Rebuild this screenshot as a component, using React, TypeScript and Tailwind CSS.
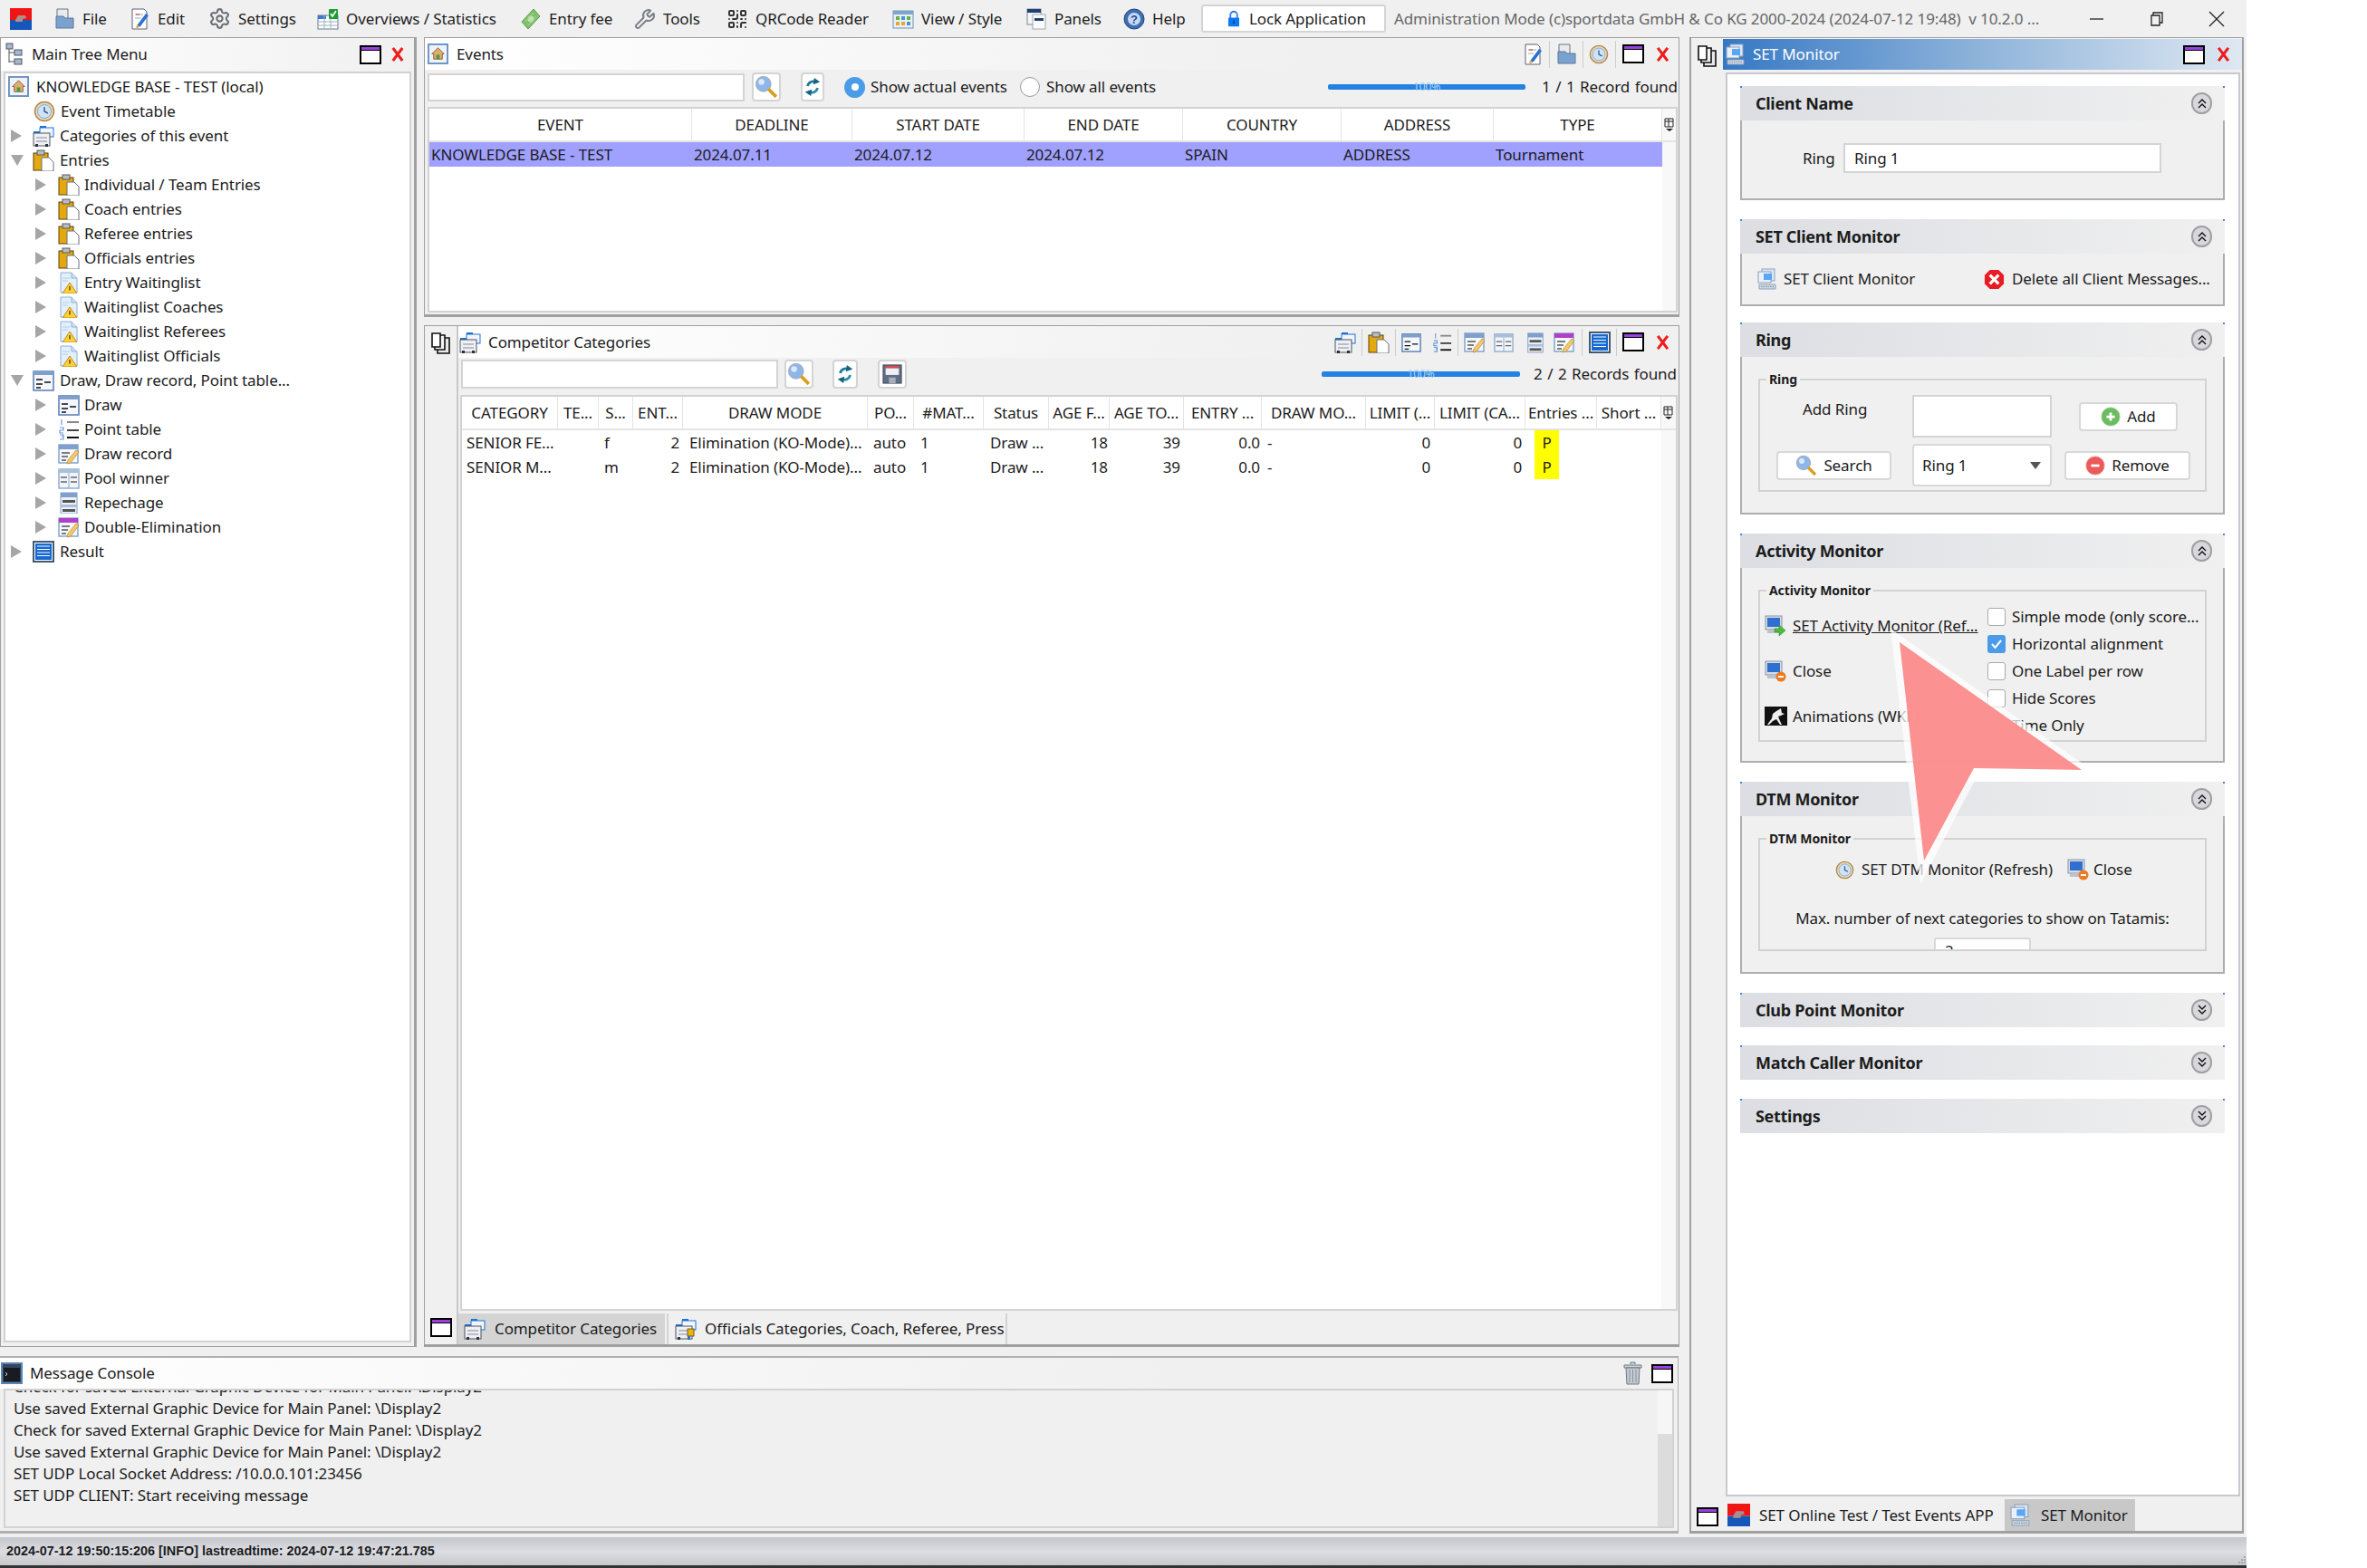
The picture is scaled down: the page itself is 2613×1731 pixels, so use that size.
import { ReactNode } from "react";
import { Settings as Gear, Wrench, QrCode } from "lucide-react";

const Ico = ({ children, className = "w-[24px] h-[24px]" }: { children: ReactNode; className?: string }) => (
  <svg viewBox="0 0 24 24" className={`shrink-0 ${className}`}>
    {children}
  </svg>
);
type IP = { className?: string };

const Logo = ({ className }: IP) => (
  <Ico className={className}>
    <rect width="24" height="13" fill="#f01414" />
    <rect y="13" width="24" height="11" fill="#1457b8" />
    <path d="M6 13l3-5h8l1 3-4 1v3H6z" fill="#a98f8f" />
  </Ico>
);
const FileIco = ({ className }: IP) => (
  <Ico className={className}>
    <path d="M4 1h12v20H4z" fill="#e8eaee" stroke="#6b7480" />
    <path d="M3 9h8l2 2h9v11H3z" fill="#7ba1cf" stroke="#5b7898" />
  </Ico>
);
const EditIco = ({ className }: IP) => (
  <Ico className={className}>
    <path d="M4 1h13l3 3v19H4z" fill="#fff" stroke="#5a6470" />
    <path d="M7 7h9M7 11h6" stroke="#9aa" />
    <path d="M8 7h4" stroke="#d33" />
    <path d="M19 6l3 2-9 12-4 2 1-4z" fill="#2a6fd8" />
    <path d="M9 18l-1 4 4-2z" fill="#f0b030" />
  </Ico>
);
const OverIco = ({ className }: IP) => (
  <Ico className={className}>
    <rect x="1" y="8" width="22" height="15" fill="#fff" stroke="#6a7a8a" />
    <rect x="1" y="8" width="9" height="4" fill="#3b78d8" />
    <path d="M1 15h22M1 19h22M8 8v15M15 8v15" stroke="#9db0c0" />
    <rect x="13" y="1" width="10" height="11" rx="1" fill="#1d9b35" />
    <path d="M15 6l2 3 4-6" stroke="#fff" strokeWidth="1.6" fill="none" />
  </Ico>
);
const MoneyIco = ({ className }: IP) => (
  <Ico className={className}>
    <path d="M2 15L15 1l7 8L9 23z" fill="#7fc06a" stroke="#5f9c50" />
    <circle cx="12" cy="12" r="3.4" fill="#bfe5ae" />
    <path d="M6 15l9-10M9 19l9-10" stroke="#a8d898" />
  </Ico>
);
const ViewIco = ({ className }: IP) => (
  <Ico className={className}>
    <rect x="1" y="3" width="22" height="19" fill="#e9f0f7" stroke="#6e8fb0" />
    <rect x="1" y="3" width="22" height="4" fill="#7ea6cd" />
    <rect x="4" y="9" width="4" height="4" fill="#65b345" />
    <rect x="10" y="9" width="4" height="4" fill="#4b95d6" />
    <rect x="16" y="9" width="4" height="4" fill="#65b345" />
    <rect x="4" y="15" width="4" height="4" fill="#e4a82f" />
    <rect x="10" y="15" width="4" height="4" fill="#e4a82f" />
    <rect x="16" y="15" width="4" height="4" fill="#4b95d6" />
  </Ico>
);
const PanelsIco = ({ className }: IP) => (
  <Ico className={className}>
    <rect x="2" y="1" width="15" height="17" fill="#f5f6f8" stroke="#7f8892" />
    <rect x="2" y="1" width="15" height="4" fill="#1e3f78" />
    <rect x="8" y="7" width="14" height="16" fill="#fbfbfb" stroke="#a0a8b0" />
    <rect x="10" y="11" width="10" height="3" fill="#1e3f78" />
  </Ico>
);
const HelpIco = ({ className }: IP) => (
  <Ico className={className}>
    <circle cx="12" cy="12" r="11" fill="#3d6fb8" stroke="#24446f" />
    <circle cx="12" cy="12" r="7" fill="#c7daf2" />
    <text x="12" y="16.5" fontSize="13" fontWeight="700" textAnchor="middle" fill="#24508f" fontFamily="Liberation Sans">?</text>
  </Ico>
);
const LockIco = ({ className }: IP) => (
  <Ico className={className}>
    <path d="M7 11V6a5 5 0 0 1 10 0v5" fill="none" stroke="#2d7ff0" strokeWidth="2.4" />
    <rect x="4" y="10" width="16" height="13" rx="1" fill="#0a78f0" />
    <rect x="11" y="14" width="2" height="5" fill="#0c3c80" />
  </Ico>
);
const HouseIco = ({ className }: IP) => (
  <Ico className={className}>
    <rect x="1" y="1" width="22" height="22" fill="#eef3fa" stroke="#6c93c4" strokeWidth="2" />
    <path d="M12 5l7 7h-2v6H7v-6H5z" fill="#d8b070" stroke="#a05a38" />
    <rect x="10" y="13" width="4" height="5" fill="#4f9a3f" />
  </Ico>
);
const ClockIco = ({ className }: IP) => (
  <Ico className={className}>
    <circle cx="12" cy="12" r="10.5" fill="#e8d8b8" stroke="#b08850" strokeWidth="1.5" />
    <circle cx="12" cy="12" r="7.5" fill="#cfe3f8" stroke="#8da8c8" />
    <path d="M12 7v5l4 2" stroke="#39598a" strokeWidth="1.4" fill="none" />
  </Ico>
);
const CatIco = ({ className }: IP) => (
  <Ico className={className}>
    <rect x="8" y="1" width="7" height="3" fill="#1c72d8" />
    <rect x="8" y="3" width="15" height="10" fill="#f2f6fb" stroke="#1c72d8" />
    <rect x="1" y="7" width="7" height="3" fill="#1c72d8" />
    <rect x="1" y="9" width="18" height="14" fill="#eef0f3" stroke="#4c5560" />
    <path d="M4 14h12M4 18h12" stroke="#aab" strokeWidth="1.5" />
    <rect x="3" y="21" width="3" height="3" fill="#2a3240" />
    <rect x="14" y="21" width="3" height="3" fill="#2a3240" />
  </Ico>
);
const OfficialIco = ({ className }: IP) => (
  <Ico className={className}>
    <rect x="8" y="1" width="7" height="3" fill="#1c72d8" />
    <rect x="8" y="3" width="15" height="10" fill="#f2f6fb" stroke="#1c72d8" />
    <rect x="1" y="7" width="7" height="3" fill="#1c72d8" />
    <rect x="1" y="9" width="18" height="14" fill="#eef0f3" stroke="#4c5560" />
    <path d="M4 14h12M4 18h12" stroke="#aab" strokeWidth="1.5" />
    <rect x="14" y="12" width="7" height="8" fill="#eab40c" stroke="#5e4008" strokeWidth=".8" />
    <rect x="3" y="21" width="3" height="3" fill="#2a3240" />
    <rect x="14" y="20" width="3" height="4" fill="#2a72c8" />
  </Ico>
);
const ClipIco = ({ className }: IP) => (
  <Ico className={className}>
    <rect x="1" y="4" width="16" height="19" fill="#e4a90f" stroke="#5e4008" />
    <rect x="5" y="1" width="8" height="5" fill="#b8bcc4" stroke="#5a5a5a" />
    <path d="M10 9h8l5 5v10H10z" fill="#fff" stroke="#69727e" />
  </Ico>
);
const WaitIco = ({ className }: IP) => (
  <Ico className={className}>
    <path d="M3 1h12l6 6v16H3z" fill="#e3effb" stroke="#8db0d8" />
    <path d="M15 1v6h6" fill="#cfe0f4" stroke="#8db0d8" />
    <path d="M5 7h8M5 10h6" stroke="#b6cde8" />
    <path d="M13 12l8 12H5z" fill="#f9d23a" stroke="#c58a12" />
    <path d="M13 16v4.500" stroke="#6a4a08" strokeWidth="1.5" />
  </Ico>
);
const DrawIco = ({ className }: IP) => (
  <Ico className={className}>
    <rect x="1" y="2" width="22" height="21" fill="#f4f7fb" stroke="#5f83b5" strokeWidth="1.6" />
    <rect x="1" y="2" width="22" height="4" fill="#7fa0cc" />
    <path d="M4 11h7M4 16h7M13 14h7M4 20h5" stroke="#111" strokeWidth="1.5" />
  </Ico>
);
const PointIco = ({ className }: IP) => (
  <Ico className={className}>
    <path d="M4 1v6M2 10h4v3H2v3h4M2 18h4v5H2M4 20h2" stroke="#6d9ad8" strokeWidth="1.2" fill="none" />
    <path d="M10 4h13" stroke="#888" strokeWidth="2" />
    <path d="M10 13h13" stroke="#444" strokeWidth="2" />
    <path d="M10 21h13" stroke="#111" strokeWidth="2" />
  </Ico>
);
const RecordIco = ({ className, top = "#7fa0cc" }: IP & { top?: string }) => (
  <Ico className={className}>
    <rect x="1" y="2" width="21" height="20" fill="#f4f7fb" stroke="#7fa0cc" strokeWidth="1.4" />
    <rect x="1" y="2" width="21" height="5" fill={top} />
    <path d="M4 11h9M4 15h7M4 19h5" stroke="#555" strokeWidth="1.4" />
    <path d="M20 8l3 2-9 12-4 1 1-4z" fill="#f3c969" stroke="#b8862c" strokeWidth=".7" />
  </Ico>
);
const PoolIco = ({ className }: IP) => (
  <Ico className={className}>
    <rect x="1" y="2" width="22" height="21" fill="#f1f5fa" stroke="#8aa8cc" strokeWidth="1.4" />
    <rect x="1" y="2" width="22" height="4" fill="#a9c0dd" />
    <path d="M12 6v17" stroke="#8aa8cc" />
    <path d="M3 11h7M3 16h7M14 11h7M14 16h7" stroke="#666" strokeWidth="1.5" />
  </Ico>
);
const RepIco = ({ className }: IP) => (
  <Ico className={className}>
    <rect x="3" y="1" width="18" height="23" fill="#eef2f8" stroke="#7fa0cc" />
    <rect x="3" y="1" width="18" height="5" fill="#7fa0cc" />
    <rect x="5" y="9" width="14" height="3" fill="#555" />
    <rect x="3" y="14" width="18" height="3" fill="#a9c0dd" />
    <rect x="5" y="19" width="14" height="3" fill="#555" />
  </Ico>
);
const ResultIco = ({ className }: IP) => (
  <Ico className={className}>
    <rect x="1" y="1" width="22" height="22" fill="#fff" stroke="#44586e" strokeWidth="2" />
    <rect x="3" y="3" width="18" height="18" fill="#1568d0" />
    <path d="M5 6h14M5 9.500h14M5 13h14M5 16.500h14" stroke="#fff" />
  </Ico>
);
const MaxIco = ({ className = "w-[24px] h-[30px]" }: IP) => (
  <span className={`shrink-0 flex flex-col border-[2px] border-black bg-white ${className}`}>
    <span className="h-[4px] bg-[#9a3fe0] border-b border-black" />
  </span>
);
const CloseIco = ({ className = "w-[16px] h-[20px]" }: IP) => (
  <svg viewBox="0 0 16 20" className={`shrink-0 ${className}`}>
    <path d="M2 2l12 16M14 2L2 18" stroke="#ee1c1c" strokeWidth="3.4" />
  </svg>
);
const StackIco = ({ className = "w-[22px] h-[24px]" }: IP) => (
  <svg viewBox="0 0 22 24" className={`shrink-0 ${className}`}>
    <path d="M7 6h13v17H7z" fill="#e8e8e8" stroke="#111" strokeWidth="1.6" />
    <path d="M4 3h11v16H4z" fill="#f4f4f4" stroke="#111" strokeWidth="1.6" />
    <path d="M1 1h9v15H1z" fill="#fff" stroke="#111" strokeWidth="1.6" />
  </svg>
);
const SearchIco = ({ className = "w-[26px] h-[26px]" }: IP) => (
  <Ico className={className}>
    <circle cx="9" cy="9" r="7.5" fill="#8cb6ec" stroke="#a2b4c8" strokeWidth="1.5" />
    <circle cx="7" cy="7" r="3" fill="#dce9fa" />
    <path d="M14 14l8 8" stroke="#d8a020" strokeWidth="3.4" />
  </Ico>
);
const RefreshIco = ({ className = "w-[22px] h-[24px]" }: IP) => (
  <Ico className={className}>
    <path d="M6 11a7 7 0 0 1 10-5" fill="none" stroke="#1f7a96" strokeWidth="3" />
    <path d="M14 1l7 5-8 3z" fill="#15647c" />
    <path d="M18 13a7 7 0 0 1-10 5" fill="none" stroke="#2a8ca8" strokeWidth="3" />
    <path d="M10 23l-7-5 8-3z" fill="#15647c" />
  </Ico>
);
const SaveIco = ({ className = "w-[22px] h-[24px]" }: IP) => (
  <Ico className={className}>
    <rect x="1" y="1" width="22" height="22" fill="#5f6d86" stroke="#3a4252" />
    <rect x="4" y="2" width="16" height="3" fill="#d84c4c" />
    <rect x="4" y="5" width="16" height="8" fill="#eef0f4" />
    <rect x="8" y="16" width="8" height="7" fill="#a7adb9" />
  </Ico>
);
const MonIco = ({ className }: IP) => (
  <Ico className={className}>
    <rect x="6" y="1" width="14" height="13" fill="#dbe7f4" stroke="#8ba2bb" />
    <rect x="2" y="4" width="14" height="12" fill="#eaf0f7" stroke="#8ba2bb" />
    <rect x="8" y="6" width="9" height="7" fill="#58a6f5" />
    <path d="M3 18h18v5H3z" fill="#cfd8e2" stroke="#8ba2bb" />
    <path d="M5 20.500h14" stroke="#7f8f9f" strokeDasharray="1.500 1" />
  </Ico>
);
const PcIco = ({ kind, className = "w-[24px] h-[24px]" }: IP & { kind: "go" | "stop" }) => (
  <Ico className={className}>
    <rect x="1" y="1" width="18" height="15" fill="#d6dce4" stroke="#8993a0" />
    <rect x="3" y="3" width="14" height="10" fill="#2f6fd2" />
    <path d="M3 17h14v3H3z" fill="#bcc3cc" />
    {kind === "go" ? (
      <path d="M11 15h5v-4l7 6-7 6v-4h-5z" fill="#4fbb3e" stroke="#2e8a25" strokeWidth=".6" />
    ) : (
      <g>
        <circle cx="18" cy="18" r="5.500" fill="#ec7a1e" />
        <rect x="15" y="17" width="6" height="2" fill="#fff" />
      </g>
    )}
  </Ico>
);
const AnimIco = ({ className = "w-[25px] h-[21px]" }: IP) => (
  <svg viewBox="0 0 25 21" className={`shrink-0 ${className}`}>
    <rect width="25" height="21" fill="#111" />
    <path d="M3 20l5-7 1-5 4-3 5-3 1 5 3 1-4 2-3 1 2 5 2 4h-2l-4-6-4 2-4 4z" fill="#eee" />
  </svg>
);
const TrashIco = ({ className = "w-[21px] h-[26px]" }: IP) => (
  <svg viewBox="0 0 21 26" className={`shrink-0 ${className}`}>
    <path d="M8 3V1h5v2M1 4h19v3H1z" fill="#cdd2d8" stroke="#6f7882" />
    <path d="M3 7h15l-1 18H4z" fill="#c2c9d1" stroke="#6f7882" />
    <path d="M7 9v14M10.500 9v14M14 9v14" stroke="#8b949e" />
  </svg>
);
const ColsIco = () => (
  <svg viewBox="0 0 12 16" className="w-[12px] h-[16px]">
    <path d="M1 1h9v9H1zM1 4h9M5 1v9" fill="none" stroke="#222" />
    <path d="M2 12h8l-4 3z" fill="#222" />
  </svg>
);
const Collapse = ({ open }: { open: boolean }) => (
  <span className="w-[23px] h-[24px] rounded-full bg-[#d8d8dc] border-[2px] border-[#a0a0a4] flex items-center justify-center shrink-0">
    <svg viewBox="0 0 12 12" className="w-[12px] h-[14px]">
      <path
        d={open ? "M2 6l4-4 4 4M2 11l4-4 4 4" : "M2 1l4 4 4-4M2 6l4 4 4-4"}
        fill="none"
        stroke="#111"
        strokeWidth="1.4"
      />
    </svg>
  </span>
);

const FONT = "[font-family:'Noto_Sans',sans-serif] text-[17px] tracking-[-0.1px] text-[#1c1c1c]";

const menu = [
  { label: "File", icon: <FileIco />, w: "w-[83px]" },
  { label: "Edit", icon: <EditIco />, w: "w-[88px]" },
  { label: "Settings", icon: <Gear size={25} color="#6a6f75" />, w: "w-[120px]" },
  { label: "Overviews / Statistics", icon: <OverIco />, w: "w-[224px]" },
  { label: "Entry fee", icon: <MoneyIco />, w: "w-[126px]" },
  { label: "Tools", icon: <Wrench size={24} color="#7a8088" />, w: "w-[102px]" },
  { label: "QRCode Reader", icon: <QrCode size={24} color="#333" />, w: "w-[183px]" },
  { label: "View / Style", icon: <ViewIco />, w: "w-[147px]" },
  { label: "Panels", icon: <PanelsIco />, w: "w-[108px]" },
  { label: "Help", icon: <HelpIco />, w: "w-[86px]" },
];

function Toolbar() {
  return (
    <div className="h-[41px] flex items-center pl-[11px]">
      <Logo />
      <div className="w-[24px]" />
      {menu.map((m) => (
        <div key={m.label} className={`${m.w} flex items-center gap-[8px] whitespace-nowrap`}>
          {m.icon}
          <span>{m.label}</span>
        </div>
      ))}
      <div className="w-[204px] h-[31px] flex items-center pl-[25px] gap-[8px] bg-white border-2 border-[#d4d4d4] rounded-[3px]">
        <LockIco className="w-[18px] h-[24px]" />
        <span>Lock Application</span>
      </div>
      <span className="ml-[9px] w-[745px] text-[#666] whitespace-nowrap">
        Administration Mode (c)sportdata GmbH &amp; Co KG 2000-2024 (2024-07-12 19:48)&nbsp; v 10.2.0 ...
      </span>
      <div className="w-[8px]" />
      <svg viewBox="0 0 18 18" className="w-[18px] h-[18px] ml-[14px]">
        <path d="M1 9h15" stroke="#222" strokeWidth="1.3" />
      </svg>
      <svg viewBox="0 0 18 18" className="w-[18px] h-[18px] ml-[48px]">
        <path d="M5 5V2h10v11h-3M3 5h9v11H3z" fill="none" stroke="#222" strokeWidth="1.3" />
      </svg>
      <svg viewBox="0 0 18 18" className="w-[18px] h-[18px] ml-[48px]">
        <path d="M1 1l16 16M17 1L1 17" stroke="#222" strokeWidth="1.3" />
      </svg>
    </div>
  );
}

const tree = [
  { pad: "pl-[3px]", gap: "gap-[8px]", arrow: "none", icon: <HouseIco className="w-[23px] h-[23px]" />, label: "KNOWLEDGE BASE - TEST (local)", slot: "" },
  { pad: "pl-[31px]", gap: "gap-[6px]", arrow: "none", icon: <ClockIco />, label: "Event Timetable", slot: "" },
  { pad: "pl-[6px]", gap: "gap-[6px]", arrow: "right", icon: <CatIco />, label: "Categories of this event", slot: "w-[24px]" },
  { pad: "pl-[6px]", gap: "gap-[6px]", arrow: "down", icon: <ClipIco />, label: "Entries", slot: "w-[24px]" },
  { pad: "pl-[33px]", gap: "gap-[5px]", arrow: "right", icon: <ClipIco />, label: "Individual / Team Entries", slot: "w-[25px]" },
  { pad: "pl-[33px]", gap: "gap-[5px]", arrow: "right", icon: <ClipIco />, label: "Coach entries", slot: "w-[25px]" },
  { pad: "pl-[33px]", gap: "gap-[5px]", arrow: "right", icon: <ClipIco />, label: "Referee entries", slot: "w-[25px]" },
  { pad: "pl-[33px]", gap: "gap-[5px]", arrow: "right", icon: <ClipIco />, label: "Officials entries", slot: "w-[25px]" },
  { pad: "pl-[33px]", gap: "gap-[5px]", arrow: "right", icon: <WaitIco />, label: "Entry Waitinglist", slot: "w-[25px]" },
  { pad: "pl-[33px]", gap: "gap-[5px]", arrow: "right", icon: <WaitIco />, label: "Waitinglist Coaches", slot: "w-[25px]" },
  { pad: "pl-[33px]", gap: "gap-[5px]", arrow: "right", icon: <WaitIco />, label: "Waitinglist Referees", slot: "w-[25px]" },
  { pad: "pl-[33px]", gap: "gap-[5px]", arrow: "right", icon: <WaitIco />, label: "Waitinglist Officials", slot: "w-[25px]" },
  { pad: "pl-[6px]", gap: "gap-[6px]", arrow: "down", icon: <DrawIco />, label: "Draw, Draw record, Point table...", slot: "w-[24px]" },
  { pad: "pl-[33px]", gap: "gap-[5px]", arrow: "right", icon: <DrawIco />, label: "Draw", slot: "w-[25px]" },
  { pad: "pl-[33px]", gap: "gap-[5px]", arrow: "right", icon: <PointIco />, label: "Point table", slot: "w-[25px]" },
  { pad: "pl-[33px]", gap: "gap-[5px]", arrow: "right", icon: <RecordIco />, label: "Draw record", slot: "w-[25px]" },
  { pad: "pl-[33px]", gap: "gap-[5px]", arrow: "right", icon: <PoolIco />, label: "Pool winner", slot: "w-[25px]" },
  { pad: "pl-[33px]", gap: "gap-[5px]", arrow: "right", icon: <RepIco />, label: "Repechage", slot: "w-[25px]" },
  { pad: "pl-[33px]", gap: "gap-[5px]", arrow: "right", icon: <RecordIco top="#b040c8" />, label: "Double-Elimination", slot: "w-[25px]" },
  { pad: "pl-[6px]", gap: "gap-[6px]", arrow: "right", icon: <ResultIco />, label: "Result", slot: "w-[24px]" },
];

function TreeArrow({ dir }: { dir: string }) {
  if (dir === "right")
    return (
      <svg viewBox="0 0 12 14" className="w-[12px] h-[14px]">
        <path d="M0 0l12 7-12 7z" fill="#a6a6a6" />
      </svg>
    );
  return (
    <svg viewBox="0 0 14 12" className="w-[14px] h-[12px]">
      <path d="M0 0h14L7 12z" fill="#a6a6a6" />
    </svg>
  );
}

function TreePanel() {
  return (
    <div className="w-[460px] h-full border border-[#a0a0a0] border-r-[3px] flex flex-col">
      <div className="h-[36px] flex items-center pl-[5px] pr-[11px] bg-gradient-to-r from-white to-[#f0f0f0]">
        <svg viewBox="0 0 20 26" className="w-[20px] h-[26px] shrink-0">
          <path d="M4 4v18M4 11h6M4 21h6" stroke="#555" fill="none" />
          <rect x="1" y="1" width="7" height="6" fill="#a5b8cf" stroke="#556" />
          <rect x="10" y="8" width="8" height="6" fill="#a5b8cf" stroke="#556" />
          <rect x="10" y="18" width="8" height="6" fill="#a5b8cf" stroke="#556" />
        </svg>
        <span className="ml-[9px] flex-1">Main Tree Menu</span>
        <MaxIco className="w-[24px] h-[21px]" />
        <CloseIco className="ml-[11px] w-[14px] h-[18px]" />
      </div>
      <div className="mx-[3px] mb-[4px] mt-[1px] flex-1 bg-white border-2 border-[#d2d2d2] pt-[1px]">
        {tree.map((t) => (
          <div key={t.label} className={`h-[27px] flex items-center whitespace-nowrap ${t.pad}`}>
            {t.arrow !== "none" && (
              <span className={t.slot}>
                <TreeArrow dir={t.arrow} />
              </span>
            )}
            <div className={`flex items-center ${t.gap}`}>
              {t.icon}
              <span>{t.label}</span>
            </div>
          </div>
        ))}
      </div>
    </div>
  );
}

function IconBtn({ children, w }: { children: ReactNode; w: string }) {
  return (
    <div className={`${w} h-[32px] shrink-0 bg-white border-2 border-[#d4d4d4] rounded-[4px] flex items-center justify-center`}>
      {children}
    </div>
  );
}

function Progress({ w }: { w: string }) {
  return (
    <div className={`${w} h-[6px] rounded-[2px] bg-[#2483e2] flex items-center justify-center`}>
      <span className="text-[12px] leading-[6px] text-[#a8d0f4]">100%</span>
    </div>
  );
}

const evCols = "grid grid-cols-[290px_177px_190px_175px_175px_168px_186px_1fr]";
const evHead = ["EVENT", "DEADLINE", "START DATE", "END DATE", "COUNTRY", "ADDRESS", "TYPE"];
const evRow = ["KNOWLEDGE BASE - TEST", "2024.07.11", "2024.07.12", "2024.07.12", "SPAIN", "ADDRESS", "Tournament"];

function EventsPanel() {
  return (
    <div className="h-[309px] shrink-0 border border-[#a0a0a0] border-b-[3px] flex flex-col">
      <div className="h-[35px] shrink-0 flex items-center pl-[3px] bg-gradient-to-r from-white to-[#f0f0f0] to-70%">
        <HouseIco className="w-[23px] h-[23px]" />
        <span className="ml-[9px] flex-1">Events</span>
        <EditIco />
        <span className="w-[1px] h-[30px] bg-[#ccc] mx-[6px]" />
        <FileIco />
        <span className="w-[1px] h-[30px] bg-[#ccc] mx-[6px]" />
        <ClockIco className="w-[22px] h-[22px]" />
        <span className="w-[1px] h-[30px] bg-[#ccc] mx-[7px]" />
        <MaxIco className="w-[24px] h-[21px]" />
        <CloseIco className="ml-[13px] mr-[10px] w-[15px] h-[18px]" />
      </div>
      <div className="h-[38px] mb-[3px] shrink-0 flex items-center pl-[3px]">
        <div className="w-[350px] h-[31px] bg-white border-2 border-[#d4d4d4]" />
        <div className="w-[8px]" />
        <IconBtn w="w-[32px]">
          <SearchIco />
        </IconBtn>
        <div className="w-[22px]" />
        <IconBtn w="w-[26px]">
          <RefreshIco />
        </IconBtn>
        <span className="ml-[22px] w-[23px] h-[23px] rounded-full bg-[#4a9be8] flex items-center justify-center">
          <span className="w-[8px] h-[8px] rounded-full bg-white" />
        </span>
        <span className="ml-[6px] w-[165px] whitespace-nowrap">Show actual events</span>
        <span className="w-[22px] h-[22px] rounded-full bg-white border border-[#999]" />
        <span className="ml-[7px] w-[311px] whitespace-nowrap">Show all events</span>
        <Progress w="w-[218px]" />
        <span className="ml-[18px] whitespace-nowrap [word-spacing:1.200px]">1 / 1 Record found</span>
      </div>
      <div className="ml-[3px] mr-[1px] mb-[2px] flex-1 bg-white border-2 border-[#d2d2d2] flex flex-col">
        <div className={`${evCols} h-[37px] shrink-0 border-b-2 border-[#e4e4e4]`}>
          {evHead.map((h) => (
            <div key={h} className="flex items-center justify-center border-r border-[#e4e4e4]">
              {h}
            </div>
          ))}
          <div className="flex items-center justify-center bg-[#f8f8f8]">
            <ColsIco />
          </div>
        </div>
        <div className="flex-1 flex flex-col">
          <div className={`${evCols} h-[27px] whitespace-nowrap`}>
            {evRow.map((c, i) => (
              <div key={i} className="bg-[#a0a0ff] flex items-center pl-[2px]">
                {c}
              </div>
            ))}
            <div className="bg-[#f8f8f8]" />
          </div>
          <div className="flex-1 flex justify-end">
            <div className="w-[15px] bg-[#f8f8f8]" />
          </div>
        </div>
      </div>
    </div>
  );
}

const catCols = "grid grid-cols-[106px_45px_38px_55px_204px_51px_77px_72px_67px_82px_86px_115px_76px_100px_79px_71px_1fr]";
const catHead = ["CATEGORY", "TE...", "S...", "ENT...", "DRAW MODE", "PO...", "#MAT...", "Status", "AGE F...", "AGE TO...", "ENTRY ...", "DRAW MO...", "LIMIT (...", "LIMIT (CA...", "Entries ...", "Short ..."];
const catAlign = [
  "pl-[5px]", "", "pl-[6px]", "pr-[4px] text-right", "pl-[7px]", "pl-[6px]", "pl-[7px]", "pl-[7px]",
  "pr-[2px] text-right", "pr-[4px] text-right", "pr-[2px] text-right", "pl-[6px]", "pr-[5px] text-right", "pr-[4px] text-right", "", "",
];
const catRows = [
  ["SENIOR FE...", "", "f", "2", "Elimination (KO-Mode)...", "auto", "1", "Draw ...", "18", "39", "0.0", "-", "0", "0", "P", ""],
  ["SENIOR M...", "", "m", "2", "Elimination (KO-Mode)...", "auto", "1", "Draw ...", "18", "39", "0.0", "-", "0", "0", "P", ""],
];

function CategoriesPanel() {
  return (
    <div className="h-[1128px] shrink-0 border border-[#a0a0a0] border-b-[3px] flex">
      <div className="w-[37px] shrink-0 border-r-2 border-[#c8c8c8] flex flex-col items-center justify-between pt-[7px] pb-[8px]">
        <StackIco />
        <MaxIco className="w-[24px] h-[21px]" />
      </div>
      <div className="flex-1 min-w-0 flex flex-col">
        <div className="h-[35px] shrink-0 flex items-center pl-[1px] bg-gradient-to-r from-white to-[#f0f0f0] to-70%">
          <CatIco />
          <span className="ml-[8px] flex-1">Competitor Categories</span>
          <CatIco />
          <span className="w-[1px] h-[30px] bg-[#ccc] mx-[6px]" />
          <ClipIco />
          <span className="w-[1px] h-[30px] bg-[#ccc] mx-[6px]" />
          <DrawIco className="w-[22px] h-[22px]" />
          <PointIco className="ml-[12px] w-[22px] h-[22px]" />
          <span className="w-[1px] h-[30px] bg-[#ccc] mx-[6px]" />
          <RecordIco />
          <PoolIco className="ml-[9px] w-[22px] h-[22px]" />
          <RepIco className="ml-[13px] w-[22px] h-[24px]" />
          <RecordIco top="#b040c8" className="ml-[9px] w-[24px] h-[24px]" />
          <span className="w-[1px] h-[30px] bg-[#ccc] mx-[7px]" />
          <ResultIco />
          <span className="w-[1px] h-[30px] bg-[#ccc] mx-[6px]" />
          <MaxIco className="w-[24px] h-[21px]" />
          <CloseIco className="ml-[13px] mr-[10px] w-[15px] h-[18px]" />
        </div>
        <div className="h-[36px] mb-[5px] shrink-0 flex items-center pl-[3px]">
          <div className="w-[350px] h-[32px] bg-white border-2 border-[#d4d4d4]" />
          <div className="w-[7px]" />
          <IconBtn w="w-[32px]">
            <SearchIco />
          </IconBtn>
          <div className="w-[21px]" />
          <IconBtn w="w-[28px]">
            <RefreshIco />
          </IconBtn>
          <div className="w-[22px]" />
          <IconBtn w="w-[32px]">
            <SaveIco />
          </IconBtn>
          <div className="w-[458px]" />
          <Progress w="w-[219px]" />
          <span className="ml-[15px] whitespace-nowrap [word-spacing:1.200px]">2 / 2 Records found</span>
        </div>
        <div className="ml-[2px] mr-[1px] h-[1011px] shrink-0 bg-white border-2 border-[#d2d2d2] flex flex-col">
          <div className={`${catCols} h-[37px] shrink-0 border-b-2 border-[#e4e4e4] whitespace-nowrap`}>
            {catHead.map((h) => (
              <div key={h} className="flex items-center justify-center border-r border-[#e4e4e4] overflow-hidden">
                {h}
              </div>
            ))}
            <div className="flex items-center justify-center bg-[#f8f8f8]">
              <ColsIco />
            </div>
          </div>
          {catRows.map((r, i) => (
            <div key={i} className={`${catCols} h-[27px] shrink-0 whitespace-nowrap`}>
              {r.map((c, j) =>
                c === "P" ? (
                  <div key={j} className="pl-[10px]">
                    <div className="w-[27px] h-[27px] bg-[#ffff00] flex items-center justify-center">P</div>
                  </div>
                ) : (
                  <div key={j} className={`leading-[27px] ${catAlign[j]}`}>
                    {c}
                  </div>
                ),
              )}
              <div className="bg-[#f8f8f8]" />
            </div>
          ))}
          <div className="flex-1 flex justify-end">
            <div className="w-[16px] bg-[#f8f8f8]" />
          </div>
        </div>
        <div className="flex-1 flex">
          <div className="w-[228px] mt-[3px] flex items-center pl-[6px] gap-[10px] bg-[#d4d4d4] whitespace-nowrap">
            <CatIco />
            <span>Competitor Categories</span>
          </div>
          <div className="mt-[3px] ml-[2px] w-[376px] flex items-center pl-[7px] gap-[9px] whitespace-nowrap border-l-2 border-r-2 border-[#d4d4d4]">
            <OfficialIco />
            <span>Officials Categories, Coach, Referee, Press</span>
          </div>
        </div>
      </div>
    </div>
  );
}

const lines = [
  "Check for saved External Graphic Device for Main Panel: \\Display2",
  "Use saved External Graphic Device for Main Panel: \\Display2",
  "Check for saved External Graphic Device for Main Panel: \\Display2",
  "Use saved External Graphic Device for Main Panel: \\Display2",
  "SET UDP Local Socket Address: /10.0.0.101:23456",
  "SET UDP CLIENT: Start receiving message",
];

function ConsolePanel() {
  return (
    <div className="mt-[10px] h-[196px] w-[1853px] border-t-2 border-r border-b-[3px] border-[#b0b0b0] flex flex-col">
      <div className="h-[34px] shrink-0 flex items-center pl-[1px] bg-gradient-to-r from-white to-[#f0f0f0] to-70%">
        <svg viewBox="0 0 24 24" className="w-[24px] h-[24px] shrink-0">
          <rect x="1" y="1" width="22" height="22" fill="#33475f" stroke="#5b84b5" strokeWidth="2" />
          <rect x="3" y="6" width="18" height="15" fill="#181c22" />
          <path d="M5 11l2 2-2 2" stroke="#ddd" fill="none" />
        </svg>
        <span className="ml-[8px] flex-1">Message Console</span>
        <TrashIco />
        <MaxIco className="ml-[10px] mr-[5px] w-[24px] h-[21px]" />
      </div>
      <div className="mx-[4px] mb-[3px] h-[155px] border-x-2 border-b-2 border-t-2 border-[#d2d2d2] flex overflow-hidden">
        <div className="flex-1 pl-[9px] -mt-[16px] leading-[24px] whitespace-nowrap">
          {lines.map((l, i) => (
            <div key={i}>{l}</div>
          ))}
        </div>
        <div className="w-[16px] flex flex-col justify-end bg-[#f6f6f6]">
          <div className="h-[102px] bg-[#dcdcdc]" />
        </div>
      </div>
    </div>
  );
}

function Section({ title, open = false, h, children }: { title: string; open?: boolean; h: string; children?: ReactNode }) {
  return (
    <div className={`relative ${h} shrink-0 flex flex-col`}>
      <span className="absolute left-0 top-0 w-[2px] h-[2px] bg-[#4a86d0]" />
      <span className="absolute right-0 top-0 w-[2px] h-[2px] bg-[#4a86d0]" />
      <div className="h-[38px] shrink-0 flex items-center pl-[17px] pr-[14px] justify-between font-bold text-[18px] tracking-[-0.3px] bg-gradient-to-r from-[#dcdee3] to-[#f0f0f0]">
        {title}
        <Collapse open={open} />
      </div>
      {open && (
        <div className="flex-1 bg-[#f0f0f0] border-x-2 border-b-2 border-[#aeaeae]">{children}</div>
      )}
    </div>
  );
}

function Group({ title, className, children }: { title: string; className: string; children: ReactNode }) {
  return (
    <div className={`mx-[18px] border-2 border-[#d2d2d2] ${className}`}>
      <div className="-mt-[10px] ml-[7px] w-fit px-[3px] bg-[#f0f0f0] text-[14px] leading-[18px] font-bold">{title}</div>
      {children}
    </div>
  );
}

function Btn({ className, icon, label }: { className: string; icon: ReactNode; label: string }) {
  return (
    <div className={`h-[32px] bg-white border-2 border-[#d8d8d8] rounded-[4px] flex items-center justify-center gap-[7px] ${className}`}>
      {icon}
      {label}
    </div>
  );
}

const checks = [
  { label: "Simple mode (only score...", on: false },
  { label: "Horizontal alignment", on: true },
  { label: "One Label per row", on: false },
  { label: "Hide Scores", on: false },
  { label: "Time Only", on: false },
];

function MonitorPanel() {
  return (
    <div className="ml-[5px] w-[612px] h-full border border-[#a0a0a0] border-x-[2px] border-b-[3px] flex">
      <div className="w-[35px] shrink-0 flex flex-col items-center justify-between pt-[8px] pb-[5px]">
        <StackIco />
        <MaxIco className="w-[24px] h-[21px]" />
      </div>
      <div className="flex-1 min-w-0 flex flex-col">
        <div className="h-[34px] shrink-0 mt-[1px] flex items-center pl-[2px] pr-[13px] bg-gradient-to-r from-[#3478c4] via-[#8fb4da] to-[#dfe8f2] text-white">
          <MonIco />
          <span className="ml-[7px] flex-1">SET Monitor</span>
          <MaxIco className="w-[24px] h-[21px]" />
          <CloseIco className="ml-[13px] w-[15px] h-[18px]" />
        </div>
        <div className="ml-[3px] mr-[2px] mt-[3px] h-[1572px] bg-white border-2 border-[#c8c8d0] pl-[14px] pr-[15px] pt-[13px] flex flex-col gap-[21px]">
          <Section title="Client Name" open h="h-[126px]">
            <div className="pt-[25px] pl-[67px] flex items-center">
              <span className="w-[45px]">Ring</span>
              <div className="w-[351px] h-[33px] bg-white border-2 border-[#d4d4d4] pl-[10px] leading-[29px]">Ring 1</div>
            </div>
          </Section>
          <Section title="SET Client Monitor" open h="h-[93px]">
            <div className="h-[56px] pl-[16px] flex items-center whitespace-nowrap">
              <MonIco />
              <span className="ml-[6px] w-[221px]">SET Client Monitor</span>
              <svg viewBox="0 0 24 24" className="w-[23px] h-[23px] shrink-0">
                <path d="M7 1h10l6 6v10l-6 6H7l-6-6V7z" fill="#e81c24" />
                <path d="M7 7l10 10M17 7L7 17" stroke="#fff" strokeWidth="3.4" />
              </svg>
              <span className="ml-[8px]">Delete all Client Messages...</span>
            </div>
          </Section>
          <Section title="Ring" open h="h-[212px]">
            <Group title="Ring" className="mt-[24px] h-[125px]">
              <div className="pt-[8px] grid grid-cols-[168px_154px_1fr] grid-rows-[47px_47px] gap-y-[7px]">
                <div className="pl-[47px] pt-[3px]">Add Ring</div>
                <div className="bg-white border-2 border-[#d4d4d4]" />
                <div className="flex items-center">
                  <Btn
                    className="ml-[30px] w-[109px]"
                    label="Add"
                    icon={
                      <svg viewBox="0 0 24 24" className="w-[22px] h-[22px]">
                        <circle cx="12" cy="12" r="11" fill="#6cbb63" stroke="#8ed086" />
                        <path d="M12 7v10M7 12h10" stroke="#fff" strokeWidth="3" />
                      </svg>
                    }
                  />
                </div>
                <div className="flex items-center">
                  <Btn className="ml-[18px] w-[127px]" label="Search" icon={<SearchIco className="w-[24px] h-[24px]" />} />
                </div>
                <div className="bg-white border-2 border-[#d8d8d8] rounded-[4px] flex items-center justify-between pl-[9px] pr-[10px]">
                  Ring 1
                  <svg viewBox="0 0 12 8" className="w-[12px] h-[8px]">
                    <path d="M0 0h12L6 8z" fill="#555" />
                  </svg>
                </div>
                <div className="flex items-center">
                  <Btn
                    className="ml-[14px] w-[139px]"
                    label="Remove"
                    icon={
                      <svg viewBox="0 0 24 24" className="w-[22px] h-[22px]">
                        <circle cx="12" cy="12" r="11" fill="#ea5a5a" stroke="#f08a8a" />
                        <path d="M7 12h10" stroke="#fff" strokeWidth="3" />
                      </svg>
                    }
                  />
                </div>
              </div>
            </Group>
          </Section>
          <Section title="Activity Monitor" open h="h-[253px]">
            <Group title="Activity Monitor" className="mt-[24px] h-[168px]">
              <div className="flex whitespace-nowrap">
                <div className="w-[251px] pl-[5px] pt-[5px] flex flex-col">
                  <div className="h-[50px] flex items-center gap-[7px]">
                    <PcIco kind="go" />
                    <span className="underline">SET Activity Monitor (Ref...</span>
                  </div>
                  <div className="h-[50px] flex items-center gap-[7px]">
                    <PcIco kind="stop" />
                    <span>Close</span>
                  </div>
                  <div className="h-[49px] flex items-center gap-[6px]">
                    <AnimIco />
                    <span>Animations (WKF)</span>
                  </div>
                </div>
                <div className="pt-[5px] flex flex-col">
                  {checks.map((c) => (
                    <div key={c.label} className="h-[30px] flex items-center gap-[7px]">
                      {c.on ? (
                        <span className="w-[20px] h-[20px] rounded-[3px] bg-[#4a9be8] flex items-center justify-center">
                          <svg viewBox="0 0 14 14" className="w-[14px] h-[14px]">
                            <path d="M2 7l3.500 4L12 3" stroke="#fff" strokeWidth="2" fill="none" />
                          </svg>
                        </span>
                      ) : (
                        <span className="w-[20px] h-[20px] rounded-[3px] bg-white border border-[#aaa]" />
                      )}
                      {c.label}
                    </div>
                  ))}
                </div>
              </div>
            </Group>
          </Section>
          <Section title="DTM Monitor" open h="h-[212px]">
            <Group title="DTM Monitor" className="mt-[24px] h-[125px]">
              <div className="h-[50px] pl-[83px] flex items-center whitespace-nowrap">
                <ClockIco className="w-[21px] h-[21px]" />
                <span className="ml-[8px] w-[227px]">SET DTM Monitor (Refresh)</span>
                <PcIco kind="stop" />
                <span className="ml-[5px]">Close</span>
              </div>
              <div className="h-[50px] pt-[8px] flex items-center justify-center whitespace-nowrap">
                Max. number of next categories to show on Tatamis:
              </div>
              <div className="h-[13px] overflow-hidden">
                <div className="ml-[192px] w-[107px] h-[30px] bg-white border-2 border-[#d8d8d8] rounded-[3px] pl-[10px] leading-[26px]">2</div>
              </div>
            </Group>
          </Section>
          <Section title="Club Point Monitor" h="h-[37px]" />
          <Section title="Match Caller Monitor" h="h-[38px]" />
          <Section title="Settings" h="h-[37px]" />
        </div>
        <div className="flex-1 flex items-center pt-[3px] whitespace-nowrap">
          <Logo className="ml-[5px] w-[25px] h-[25px]" />
          <span className="ml-[10px] w-[271px]">SET Online Test / Test Events APP</span>
          <div className="w-[144px] h-full flex items-center pl-[5px] gap-[10px] bg-[#c8c8c8]">
            <MonIco className="w-[25px] h-[25px]" />
            <span>SET Monitor</span>
          </div>
        </div>
      </div>
    </div>
  );
}

function PointerOverlay() {
  return (
    <svg viewBox="0 0 250 310" className="absolute left-[2070px] top-[680px] w-[250px] h-[310px] pointer-events-none">
      <path d="M17 14L232 165 232 172 112 178 50 296z" fill="#fff" fillOpacity=".72" />
      <path d="M27 29L228 170 109 168 54 270z" fill="#fb8d8d" fillOpacity=".96" />
    </svg>
  );
}

export default function App() {
  return (
    <div className={`relative w-[2613px] h-[1731px] bg-white overflow-hidden ${FONT}`}>
      <div className="w-[2480px] h-full bg-[#f0f0f0] flex flex-col">
        <Toolbar />
        <div className="h-[1652px] flex">
          <div className="w-[1860px] shrink-0 flex flex-col">
            <div className="h-[1446px] flex">
              <TreePanel />
              <div className="ml-[8px] w-[1386px] flex flex-col gap-[9px]">
                <EventsPanel />
                <CategoriesPanel />
              </div>
            </div>
            <ConsolePanel />
          </div>
          <MonitorPanel />
        </div>
        <div className="mt-[4px] flex-1 flex items-center justify-between pl-[7px] bg-gradient-to-b from-[#c4c6cb] via-[#dcdde2] to-[#c8c9cc] [font-family:'Liberation_Sans',sans-serif] text-[14.4px] tracking-normal font-bold border-b-[3px] border-[#333]">
          2024-07-12 19:50:15:206 [INFO] lastreadtime: 2024-07-12 19:47:21.785
          <svg viewBox="0 0 12 12" className="w-[12px] h-[12px] self-end">
            <path d="M9 2h2v2H9zM6 5h2v2H6zM9 5h2v2H9zM3 8h2v2H3zM6 8h2v2H6zM9 8h2v2H9z" fill="#a8a8a8" />
          </svg>
        </div>
      </div>
      <PointerOverlay />
    </div>
  );
}
